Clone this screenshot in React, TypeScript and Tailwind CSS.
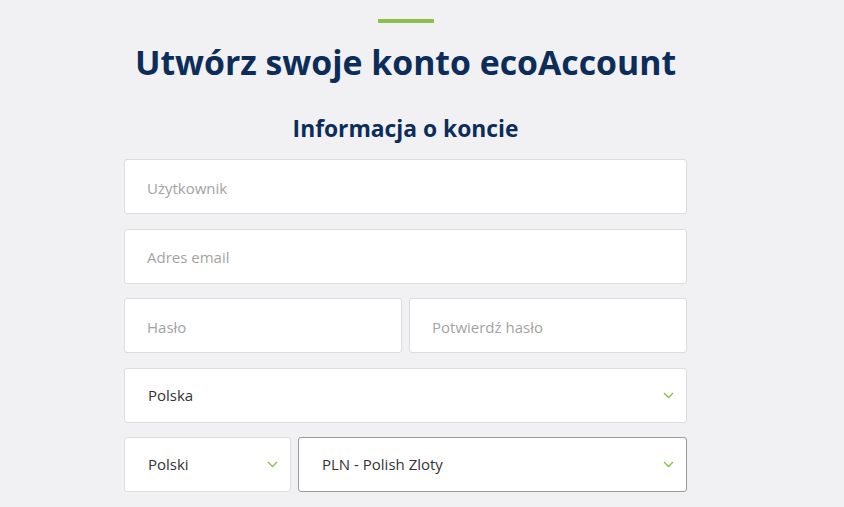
import type { FC } from "react"

// Small green chevron used by the select fields
const Chevron: FC = () => (
    <svg width="11" height="7" viewBox="0 0 11 7" fill="none" className="shrink-0">
        <path d="M1 1 L5.5 5.5 L10 1" stroke="#8dc04b" strokeWidth="1.4" />
    </svg>
)

interface FieldProps {
    label: string
    className?: string
}

// Input with a placeholder
const TextField: FC<FieldProps> = ({ label, className = "" }) => (
    <div className={`h-[55px] bg-white border border-[#dcdcdc] rounded-[3px] flex items-center pl-[22px] pt-[3px] ${className}`}>
        <span className="text-[15px] text-[#a3a3a3]">{label}</span>
    </div>
)

interface SelectProps extends FieldProps {
    focused?: boolean
}

// Select showing its chosen value
const SelectField: FC<SelectProps> = ({ label, className = "", focused }) => (
    <div
        className={`h-[55px] bg-white border rounded-[3px] flex items-center justify-between pl-[23px] pr-[12px] ${
            focused ? "border-[#9a9a9a]" : "border-[#dcdcdc]"
        } ${className}`}
    >
        <span className="text-[15px] text-[#333333]">{label}</span>
        <Chevron />
    </div>
)

const App: FC = () => {
    return (
        <div className="min-h-screen bg-[#f1f1f3] font-['Open_Sans',sans-serif] overflow-hidden">
            <div className="w-[811px] flex flex-col items-center pt-[19px]">
                <div className="w-[56px] h-[4px] bg-[#8dc04b]" />
                <h1 className="mt-[19px] text-[33.8px] leading-[40px] font-bold text-[#0c2d5a]">
                    Utwórz swoje konto ecoAccount
                </h1>
                <h2 className="mt-[32px] text-[22.8px] leading-[30px] font-bold text-[#0c2d5a]">Informacja o koncie</h2>

                <div className="mt-[15px] w-[563px] flex flex-col gap-[14.5px]">
                    <TextField label="Użytkownik" />
                    <TextField label="Adres email" />
                    <div className="flex gap-[7px]">
                        <TextField label="Hasło" className="flex-1" />
                        <TextField label="Potwierdź hasło" className="flex-1" />
                    </div>
                    <SelectField label="Polska" />
                    <div className="flex gap-[7px]">
                        <SelectField label="Polski" className="w-[167px]" />
                        <SelectField label="PLN - Polish Zloty" className="flex-1" focused />
                    </div>
                </div>
            </div>
        </div>
    )
}

export default App
